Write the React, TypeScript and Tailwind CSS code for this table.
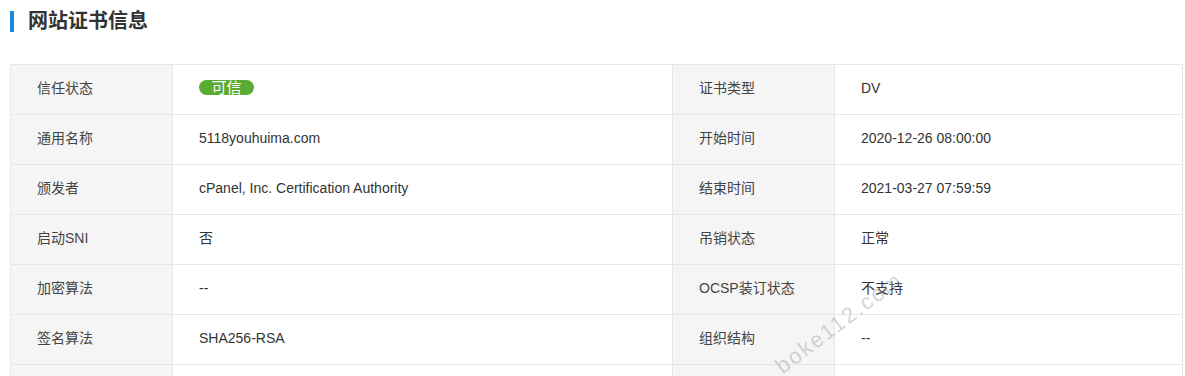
const rows: [string, string, string, string][] = [
  ['信任状态', 'badge', '证书类型', 'DV'],
  ['通用名称', '5118youhuima.com', '开始时间', '2020-12-26 08:00:00'],
  ['颁发者', 'cPanel, Inc. Certification Authority', '结束时间', '2021-03-27 07:59:59'],
  ['启动SNI', '否', '吊销状态', '正常'],
  ['加密算法', '--', 'OCSP装订状态', '不支持'],
  ['签名算法', 'SHA256-RSA', '组织结构', '--'],
  ['', '', '', ''],
]

export default function App() {
  return (
    <div className="relative h-[376px] overflow-hidden bg-white text-[14px] text-[#333] [font-family:'Liberation_Sans','Noto_Sans_CJK_SC',sans-serif]">
      <div className="flex items-center h-[42px]">
        <div className="ml-[10px] w-[4px] h-[21px] bg-[#1e88d8]" />
        <h2 className="ml-[14px] text-[20px] font-bold text-[#333] leading-none">网站证书信息</h2>
      </div>
      <div className="px-[10px] pt-[22px]">
        <table className="w-[1172px] border-collapse table-fixed">
          <colgroup>
            <col className="w-[162px]" />
            <col className="w-[500px]" />
            <col className="w-[162px]" />
            <col className="w-[348px]" />
          </colgroup>
          <tbody>
            {rows.map((r, i) => (
              <tr key={i} className="h-[50px]">
                <td className="border border-[#e6e6e6] bg-[#f5f5f5] pl-[26px] pb-[2px] text-[#444]">{r[0]}</td>
                <td className="border border-[#e6e6e6] pl-[26px] pb-[2px]">
                  {r[1] === 'badge' ? (
                    <span className="inline-flex items-center justify-center w-[55px] h-[15px] rounded-full bg-[#5aab31] text-white text-[15px] leading-none">可信</span>
                  ) : r[1]}
                </td>
                <td className="border border-[#e6e6e6] bg-[#f5f5f5] pl-[26px] pb-[2px] text-[#444]">{r[2]}</td>
                <td className="border border-[#e6e6e6] pl-[26px] pb-[2px]">{r[3]}</td>
              </tr>
            ))}
          </tbody>
        </table>
      </div>
      <div className="absolute left-[778px] top-[352px] -rotate-[37deg] origin-left text-[22px] tracking-[2px] text-[#a0a0a0]/45 pointer-events-none">boke112.com</div>
    </div>
  )
}
